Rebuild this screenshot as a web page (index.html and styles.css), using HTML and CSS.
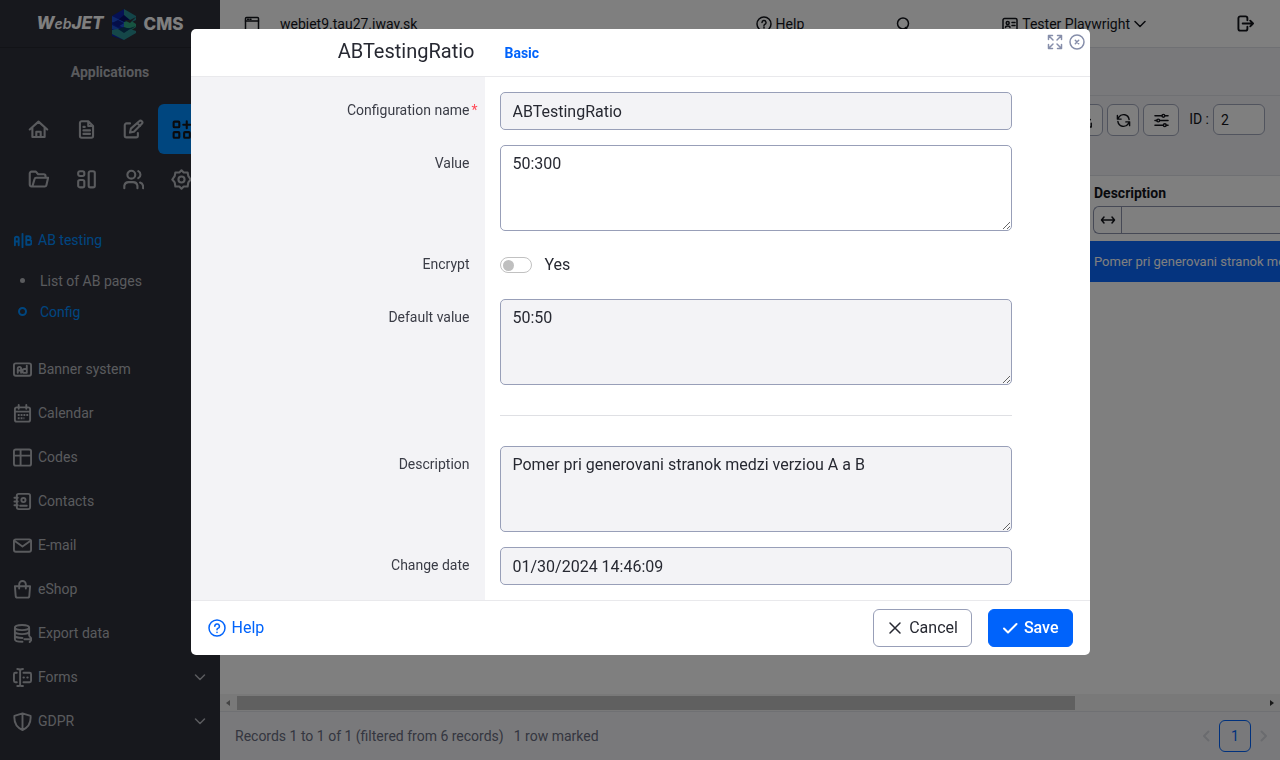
FILE: index.html
```html
<!DOCTYPE html>
<html lang="en">
<head>
<meta charset="utf-8">
<title>WebJET CMS – Config</title>
<link rel="stylesheet" href="styles.css">
</head>
<body>
<div class="app">
  <aside class="sidebar">
    <div class="logo">
      <span class="logo-word logo-web">W<small>eb</small>JET</span>
      <svg class="logo-mark" viewBox="0 0 26 32">
        <path d="M13 1 1 8v20l12 4V1z" fill="#0c22a8"/>
        <path d="M13 1l12 7v4l-6 3-6-3z" fill="#268a92"/>
        <path d="M13 7l6 5-6 4-6-4z" fill="#050f6a"/>
        <path d="M1 8l12 6v6L1 14z" fill="#1c50d8"/>
        <path d="M1 15l6-3 6 3-6 4z" fill="#0a1c90"/>
        <path d="M13 14l6-2 6 4v3l-6 4-6-3z" fill="#2fa882"/>
        <path d="M13 12h6l6-3-6 6z" fill="#2e303a"/>
        <path d="M1 17l12 6v2L1 21z" fill="#1b54d0"/>
        <path d="M13 20h6l6-2-6 4z" fill="#0e4a60"/>
        <path d="M1 22l6-1 6 3 6-3 6 2v2l-12 7-12-6z" fill="#2a8f92"/>
        <path d="M7 21l6-2 6 2-6 4z" fill="#0b3a60"/>
      </svg>
      <span class="logo-word">CMS</span>
    </div>
    <h2 class="side-title">Applications</h2>
    <nav class="tiles">
      <a class="tile" href="#" aria-label="Home"><svg viewBox="0 0 24 24"><path d="M2 12 12 3l10 9M5 10v10.500h14V10M9.500 20v-5.500h5V20"/></svg></a>
      <a class="tile" href="#" aria-label="Pages"><svg viewBox="0 0 24 24"><path d="M14 2.500H6.500a2 2 0 0 0-2 2v15a2 2 0 0 0 2 2h11a2 2 0 0 0 2-2V8zM14 2.500V8h5.500M8.500 9h1.500M8.500 13h7.500M8.500 17h7.500"/></svg></a>
      <a class="tile" href="#" aria-label="Edit"><svg viewBox="0 0 24 24"><path d="M8 5H4a2 2 0 0 0-2 2v12a2 2 0 0 0 2 2h11a2 2 0 0 0 2-2v-3M8 15.500l1-4.500L18.500 2.500a2 2 0 0 1 3 3L12.500 14.500zM16.500 5l3 3"/></svg></a>
      <a class="tile tile-active" href="#" aria-label="Applications"><svg viewBox="0 0 24 24"><rect x="3" y="3" width="6.500" height="6.500" rx="1"/><rect x="3" y="15" width="6.500" height="6.500" rx="1"/><rect x="15" y="15" width="6.500" height="6.500" rx="1"/><path d="M18 2.500v8M14 6.500h8"/></svg></a>
      <a class="tile" href="#" aria-label="Files"><svg viewBox="0 0 24 24"><path d="M5 20H4a2 2 0 0 1-2-2V5a2 2 0 0 1 2-2h5l2.500 3H18a2 2 0 0 1 2 2v2M5 20l2.500-8.500A2 2 0 0 1 9.500 10H23l-2 8.500a2 2 0 0 1-2 1.500z"/></svg></a>
      <a class="tile" href="#" aria-label="Templates"><svg viewBox="0 0 24 24"><rect x="2.500" y="2.500" width="7" height="5.500" rx="2"/><rect x="2.500" y="12.500" width="7" height="8.500" rx="2"/><rect x="14.500" y="2.500" width="7" height="18.500" rx="2"/></svg></a>
      <a class="tile" href="#" aria-label="Users"><svg viewBox="0 0 24 24"><circle cx="9.500" cy="6.500" r="4.500"/><path d="M1.500 22v-3a5 5 0 0 1 5-4h5a5 5 0 0 1 5 4v3M17.500 2.500a4.500 4.500 0 0 1 0 8M19.500 15.500a5 5 0 0 1 3.500 4V22"/></svg></a>
      <a class="tile" href="#" aria-label="Settings"><svg viewBox="0 0 24 24"><circle cx="12" cy="12" r="3.500"/><path d="m12 1.500 2.500 2.500 4.500 0 .800 4.200L22.500 12l-2.700 3.300-.800 4.700h-4.500L12 22.500 9.500 20H5l-.800-4.700L1.500 12l2.700-3.800L5 4h4.500z"/></svg></a>
    </nav>
    <ul class="menu">
      <li>
        <a class="menu-item on" href="#"><svg viewBox="0 0 20 20"><path d="M2 15V8a2 2 0 0 1 4 0v7M2 11h4M10 3v14M14 5.500h2.500a2 2 0 0 1 0 4H14zm0 4h3a2.500 2.500 0 0 1 0 5h-3z"/></svg>AB testing</a>
        <ul class="submenu">
          <li><a href="#"><i class="dot"></i>List of AB pages</a></li>
          <li><a class="on" href="#"><i class="ring"></i>Config</a></li>
        </ul>
      </li>
      <li><a class="menu-item" href="#"><svg viewBox="0 0 20 20"><rect x="1" y="3.500" width="18" height="13" rx="2"/><path d="M5 13.500V9a1.500 1.500 0 0 1 3.500 0v4.500M5 11h3.500M14.500 6v7.500H12a1.500 1.500 0 0 1 0-4h2.500"/></svg>Banner system</a></li>
      <li><a class="menu-item" href="#"><svg viewBox="0 0 20 20"><rect x="2" y="3.500" width="16" height="15" rx="2"/><path d="M2 8h16M6 1v4M14 1v4"/><path stroke-linecap="butt" stroke-dasharray="2 1" d="M5 11.500h11M5 15h7"/></svg>Calendar</a></li>
      <li><a class="menu-item" href="#"><svg viewBox="0 0 20 20"><rect x="1" y="1.500" width="18" height="17" rx="2"/><path d="M1 8h18M8 2v16"/></svg>Codes</a></li>
      <li><a class="menu-item" href="#"><svg viewBox="0 0 20 20"><rect x="4" y="2" width="14" height="16" rx="2"/><path d="M1.500 6H5M1.500 10H5M1.500 14H5M7.500 14.500h7"/><circle cx="11" cy="8.500" r="2.200"/></svg>Contacts</a></li>
      <li><a class="menu-item" href="#"><svg viewBox="0 0 20 20"><rect x="1" y="3.500" width="18" height="13" rx="2"/><path d="m1.500 5 8.500 6 8.500-6"/></svg>E-mail</a></li>
      <li><a class="menu-item" href="#"><svg viewBox="0 0 20 20"><path d="M2 6.500h16l-.800 10a2 2 0 0 1-2 2H4.800a2 2 0 0 1-2-2zM6.500 9V4.500a3.500 3.500 0 0 1 7 0V9"/></svg>eShop</a></li>
      <li><a class="menu-item" href="#"><svg viewBox="0 0 20 20"><ellipse cx="9.500" cy="3.700" rx="7.500" ry="2.700"/><path d="M2 4v12c0 1.500 3 2.700 8 2.700M17 4v8M2 8c0 1.500 3.500 2.700 7.500 2.700S17 9.500 17 8M2 12c0 1.500 3.500 2.700 8 2.700M12 16h8M17.500 13l2.500 3-2.500 3"/></svg>Export data</a></li>
      <li><a class="menu-item" href="#"><svg viewBox="0 0 20 20"><path d="M4 5H2.500A1.500 1.500 0 0 0 1 6.500v7A1.500 1.500 0 0 0 2.500 15H4M7.500 2v16M4.500 1c2 0 3 .500 3 1.500 0-1 1-1.500 3-1.500M4.500 19c2 0 3-.500 3-1.500 0 1 1 1.500 3 1.500M11 5h6.500A1.500 1.500 0 0 1 19 6.500v7a1.500 1.500 0 0 1-1.500 1.500H11M11 10h.500M15 10h.500"/></svg>Forms<svg class="caret" viewBox="0 0 12 12"><path d="m1.500 4 4.500 4.500L10.500 4"/></svg></a></li>
      <li><a class="menu-item" href="#"><svg viewBox="0 0 20 20"><path d="m10 1.500 8.500 2.500c.500 6-1.500 12-8.500 15C3 16 1 10 1.500 4zM10 1.500V19"/></svg>GDPR<svg class="caret" viewBox="0 0 12 12"><path d="m1.500 4 4.500 4.500L10.500 4"/></svg></a></li>
    </ul>
  </aside>

  <main class="main">
    <header class="topbar">
      <a class="site" href="#"><svg viewBox="0 0 16 16"><rect x="1.500" y="1.500" width="13" height="13" rx="1"/><path d="M1.500 5h13M3.500 3.200h1M6 3.200h1"/></svg>webjet9.tau27.iway.sk</a>
      <div class="topnav">
        <a href="#"><svg viewBox="0 0 16 16"><circle cx="8" cy="8" r="7"/><path d="M6 6.500a2 2 0 1 1 2.500 2L8 9.500M8 11v1"/></svg>Help</a>
        <a href="#" aria-label="Search"><svg viewBox="0 0 16 16"><circle cx="8" cy="7.500" r="5.500"/><path d="m10.500 11.500 2.500 3"/></svg></a>
        <a href="#"><svg viewBox="0 0 16 16"><path d="M1 14V4a1.500 1.500 0 0 1 1.500-1.500h11A1.500 1.500 0 0 1 15 4v10zM10 6.500h3M10 9.500h3M3.500 11.500c0-2 4.500-2 4.500 0"/><circle cx="5.700" cy="7" r="1.500"/></svg>Tester Playwright<svg class="caret-top" viewBox="0 0 12 12"><path d="m1 3.500 5 5 5-5"/></svg></a>
        <a class="logout" href="#" aria-label="Log out"><svg viewBox="0 0 18 18"><path d="M11 5.500V3.500a2 2 0 0 0-2-2H3.500a2 2 0 0 0-2 2v11a2 2 0 0 0 2 2H9a2 2 0 0 0 2-2v-2M6 9h11M14 6l3 3-3 3"/></svg></a>
      </div>
    </header>
    <div class="titlebar"></div>
    <div class="toolbar">
      <button class="tool" type="button" aria-label="Import"><svg viewBox="0 0 16 16"><path d="M8 1v9M5 7l3 3 3-3M1 11v4h11v-4"/></svg></button>
      <button class="tool" type="button" aria-label="Reload"><svg viewBox="0 0 16 16"><path d="M14 7A6 6 0 0 0 3 4.500L1.500 6.500M1.500 2.500v4h4M2 9a6 6 0 0 0 11 2.500l1.500-2M14.500 13.500v-4h-4"/></svg></button>
      <button class="tool tool-wide" type="button" aria-label="Table settings"><svg viewBox="0 0 16 16"><path d="M1 3h7.500M11.500 3H15M1 8h2M6 8h9M1 13h9M13 13h2"/><circle cx="10" cy="3" r="1.500"/><circle cx="4.500" cy="8" r="1.500"/><circle cx="11.500" cy="13" r="1.500"/></svg></button>
      <label class="id-label" for="row-id">ID :</label>
      <input class="id-input" id="row-id" value="2">
    </div>
    <div class="table-wrap">
      <table class="grid">
        <colgroup><col><col class="col-desc"></colgroup>
        <thead>
          <tr><th></th><th>Description</th></tr>
          <tr class="filters"><td></td><td><div class="filter"><button type="button" aria-label="Filter mode"><svg viewBox="0 0 16 16"><path d="M1.500 8h13M4 5 1.500 8 4 11M12 5l2.500 3L12 11"/></svg></button><input aria-label="Filter description"></div></td></tr>
        </thead>
        <tbody><tr class="selected"><td></td><td>Pomer pri generovani stranok medzi verziou A a B</td></tr></tbody>
      </table>
    </div>
    <div class="hscroll"><i class="arrow-left"></i><div class="thumb"></div><i class="arrow-right"></i></div>
    <footer class="status">
      <span>Records 1 to 1 of 1 (filtered from 6 records)</span>
      <span>1 row marked</span>
      <div class="pager">
        <button class="step" type="button" aria-label="Previous"><svg viewBox="0 0 12 12"><path d="M8.500 1.500 4 6l4.500 4.500"/></svg></button>
        <button class="page" type="button">1</button>
        <button class="step" type="button" aria-label="Next"><svg viewBox="0 0 12 12"><path d="M3.500 1.500 8 6l-4.500 4.500"/></svg></button>
      </div>
    </footer>
  </main>
</div>

<div class="backdrop">
  <form class="modal" role="dialog" aria-labelledby="modal-title">
    <header class="modal-head">
      <h1 id="modal-title">ABTestingRatio</h1>
      <a class="tab" href="#">Basic</a>
      <div class="window-buttons">
        <button type="button" aria-label="Maximize"><svg viewBox="0 0 16 16"><path d="M1.500 5.500v-4h4M10.500 1.500h4v4M14.500 10.500v4h-4M5.500 14.500h-4v-4M2 2l4 4M14 2l-4 4M2 14l4-4M14 14l-4-4"/></svg></button>
        <button type="button" aria-label="Close"><svg viewBox="0 0 16 16"><circle cx="8" cy="8" r="7"/><path d="m6.300 6.300 3.400 3.400M9.700 6.300 6.300 9.700"/></svg></button>
      </div>
    </header>
    <div class="fields">
      <div class="row"><label for="f-name">Configuration name<span class="star">*</span></label><div class="cell"><input class="control" id="f-name" value="ABTestingRatio" readonly></div></div>
      <div class="row"><label for="f-value">Value</label><div class="cell"><textarea class="control" id="f-value">50:300</textarea></div></div>
      <div class="row"><span class="row-label" id="l-enc">Encrypt</span><div class="cell"><div class="switch-line"><input class="switch" type="checkbox" id="f-enc" aria-describedby="l-enc"><label for="f-enc">Yes</label></div></div></div>
      <div class="row"><label for="f-default">Default value</label><div class="cell"><textarea class="control" id="f-default" readonly>50:50</textarea></div></div>
      <div class="row"><div class="cell cell-rule"><hr></div></div>
      <div class="row"><label for="f-desc">Description</label><div class="cell"><textarea class="control" id="f-desc" readonly>Pomer pri generovani stranok medzi verziou A a B</textarea></div></div>
      <div class="row"><label for="f-date">Change date</label><div class="cell"><input class="control" id="f-date" value="01/30/2024 14:46:09" readonly></div></div>
    </div>
    <footer class="modal-foot">
      <a class="help" href="#"><svg viewBox="0 0 18 18"><circle cx="9" cy="9" r="8"/><path d="M6.800 7.200a2.300 2.300 0 1 1 3 2.200c-.600.300-.800.600-.800 1.400M9 13.300v.200"/></svg>Help</a>
      <button class="btn" type="button"><svg viewBox="0 0 16 16"><path d="m3 3 10 10M13 3 3 13"/></svg>Cancel</button>
      <button class="btn btn-primary" type="button"><svg viewBox="0 0 16 16"><path d="m2 8.500 4 4L14.500 4"/></svg>Save</button>
    </footer>
  </form>
</div>
</body>
</html>
```
FILE: styles.css
```css
* { box-sizing: border-box; }
body {
  margin: 0;
  font: 14px/20px Roboto, "Liberation Sans", sans-serif;
  color: #13151b;
  overflow: hidden;
}
a { color: inherit; text-decoration: none; }
button, input, textarea { font: inherit; color: inherit; margin: 0; }
svg {
  flex: none;
  fill: none;
  stroke: currentColor;
  stroke-width: 1.5;
  stroke-linecap: round;
  stroke-linejoin: round;
}
ul { list-style: none; margin: 0; padding: 0; }

.app { display: grid; grid-template-columns: 220px minmax(0, 1fr); height: 100vh; }

/* sidebar */
.sidebar { background: #2e303a; color: #b4b6bc; overflow: hidden; }
.logo {
  display: flex;
  align-items: center;
  justify-content: center;
  gap: 7px;
  height: 48px;
  border-bottom: 1px solid #25262e;
  color: #fff;
}
.logo-word { font: 800 17px/20px Inter, sans-serif; }
.logo-web { font-style: italic; }
.logo-web small { font-size: 14px; font-weight: 600; }
.logo-mark { width: 26px; height: 32px; stroke: none; }
.side-title { margin: 0; padding: 14px 0; text-align: center; font-size: 14px; line-height: 20px; font-weight: 700; }
.tiles { display: grid; grid-template-columns: repeat(4, 1fr); padding: 8px 15px 14px; }
.tile { display: grid; place-items: center; height: 50px; border-radius: 6px; }
.tile svg { width: 21px; height: 21px; stroke-width: 2.4; }
.tile-active { background: #008cff; color: #13151b; }
.menu-item { display: flex; align-items: center; gap: 6px; height: 44px; padding: 0 14px 0 13px; }
.menu-item svg { width: 19px; height: 19px; stroke-width: 2; }
.menu-item .caret { width: 12px; height: 12px; margin-left: auto; stroke-width: 1.5; }
.on { color: #008cff; }
.submenu { padding: 3px 0 20px; }
.submenu a { display: flex; align-items: center; gap: 13px; height: 31px; padding-left: 18px; }
.dot, .ring { width: 9px; height: 9px; border-radius: 50%; }
.dot { width: 5px; height: 5px; margin: 0 2px; background: currentColor; }
.ring { border: 2px solid currentColor; }

/* main */
.main { display: flex; flex-direction: column; background: #fff; }
.topbar { display: flex; justify-content: space-between; align-items: center; height: 48px; padding: 0 26px 0 24px; border-bottom: 1px solid #dfe0e6; }
.topbar a { display: flex; align-items: center; gap: 4px; }
.topbar svg { width: 16px; height: 16px; }
.topbar .site { gap: 20px; }
.topnav { display: flex; gap: 91px; }
.topbar .caret-top { width: 12px; height: 12px; }
.topbar .logout svg { width: 17px; height: 17px; stroke-width: 2; }
.titlebar { height: 48px; background: #f3f3f6; border-bottom: 1px solid #dfe0e6; }
.toolbar { display: flex; justify-content: flex-end; gap: 4px; height: 80px; padding: 8px 15px; background: #f3f3f6; border-bottom: 1px solid #dfe0e6; }
.tool { display: grid; place-items: center; width: 32px; height: 32px; padding: 0; border: 1px solid #a3a9bd; border-radius: 6px; background: #fff; }
.tool svg { width: 15px; height: 15px; }
.tool-wide { width: 36px; }
.id-label { margin-left: 6px; line-height: 30px; }
.id-input { width: 52px; height: 31px; padding: 0 7px; border: 1px solid #a3a9bd; border-radius: 6px; background: #fff; }
.table-wrap { flex: 1; overflow: hidden; }
.grid { width: 100%; table-layout: fixed; border-collapse: collapse; }
.col-desc { width: 187px; }
.grid th, .grid td { padding: 0; text-align: left; white-space: nowrap; }
.grid th { height: 30px; padding: 4px 0 0 1px; font-weight: 700; }
.filters td { height: 35px; vertical-align: top; }
.filter { display: flex; height: 28px; border: 1px solid #8c93ab; border-right: 0; border-radius: 6px 0 0 6px; }
.filter button { display: grid; place-items: center; width: 28px; padding: 0; border: 0; border-right: 1px solid #8c93ab; background: none; }
.filter svg { width: 16px; height: 16px; }
.filter input { flex: 1; min-width: 0; border: 0; background: none; }
.selected { height: 41px; background: #0a68ff; color: #fff; font-size: 13px; }
.grid .selected td { padding-left: 1px; }
.hscroll { display: flex; align-items: center; height: 18px; padding: 0 6px; background: #f3f3f3; border-bottom: 1px solid #dfe0e6; }
.thumb { width: 80%; height: 14px; margin-left: 7px; background: #c1c1c1; }
.arrow-left, .arrow-right { border: 3px solid transparent; }
.arrow-left { border-right: 4px solid #888; border-left: 0; }
.arrow-right { margin-left: auto; border-left: 4px solid #333; border-right: 0; }
.status { display: flex; align-items: center; gap: 10px; height: 48px; padding: 0 7px 1px 15px; background: #f3f3f6; color: #686c80; }
.pager { display: flex; align-items: center; gap: 4px; margin-left: auto; }
.step { display: grid; place-items: center; width: 18px; padding: 0; border: 0; background: none; color: #d4d6de; }
.step svg { width: 12px; height: 12px; stroke-width: 2; }
.page { width: 32px; height: 32px; padding: 0; border: 1px solid #0063fb; border-radius: 6px; background: none; color: #0063fb; }

/* dialog */
.backdrop { position: fixed; inset: 0; padding: 29px 16px; background: rgba(0, 0, 0, .5); }
.modal { max-width: 899px; margin: 0 auto; border-radius: 5px; background: #fff; overflow: hidden; }
.modal-head { display: grid; grid-template-columns: 294px 1fr auto; height: 48px; border-bottom: 1px solid #e9e9ec; }
.modal-head h1 { margin: 0; padding: 10px 10px 0 0; text-align: right; font-size: 20px; line-height: 24px; font-weight: 400; color: #272932; }
.tab { padding: 14px 0 0 20px; font-weight: 700; color: #0063fb; }
.window-buttons { display: flex; align-items: flex-start; gap: 6px; padding: 5px 5px 0 0; }
.window-buttons button { display: grid; padding: 0; border: 0; background: none; color: #868eaa; }
.window-buttons svg { width: 16px; height: 16px; }
.fields { padding: 15px 0; display: grid; gap: 15px; background: linear-gradient(to right, #f3f3f6 294px, #fff 294px); }
.row { display: grid; grid-template-columns: 294px minmax(0, 1fr); }
.row > label, .row-label { padding: 8px 15px 0 0; text-align: right; color: #3a3c46; }
.star { margin-right: -8px; padding-left: 2px; color: #ff4b58; }
.cell { grid-column: 2; padding: 0 78px 0 15px; }
.control { display: block; width: 100%; height: 38px; padding: 6px 12px; border: 1px solid #989fb8; border-radius: 5px; background: #fff; font-size: 16px; line-height: 24px; color: #272932; }
.control:read-only { background: #f3f3f6; }
textarea.control { height: 86px; resize: vertical; }
.switch-line { display: flex; align-items: center; gap: 13px; height: 38px; font-size: 16px; line-height: 24px; color: #272932; }
.switch { appearance: none; display: grid; align-items: center; width: 32px; height: 16px; padding: 0 2px; border: 1px solid #c1c1c1; border-radius: 8px; background: #fff; }
.switch::before { content: ""; width: 11px; height: 11px; border-radius: 50%; background: #bfbfbf; }
.cell-rule hr { margin: 15px 0; border: 0; border-top: 1px solid #dfe0e4; }
.modal-foot { display: flex; align-items: center; gap: 16px; height: 55px; padding: 0 17px; border-top: 1px solid #e9e9ec; font-size: 16px; }
.help { display: flex; align-items: center; gap: 6px; margin-right: auto; color: #0063fb; }
.help svg { width: 18px; height: 18px; }
.btn { display: flex; align-items: center; gap: 6px; height: 38px; padding: 0 13px; border: 1px solid #989fb8; border-radius: 6px; background: #fff; color: #272932; }
.btn svg { width: 16px; height: 16px; }
.btn-primary { border-color: #0063fb; background: #0063fb; color: #fff; font-weight: 500; }
.btn-primary svg { stroke-width: 2; }
```
